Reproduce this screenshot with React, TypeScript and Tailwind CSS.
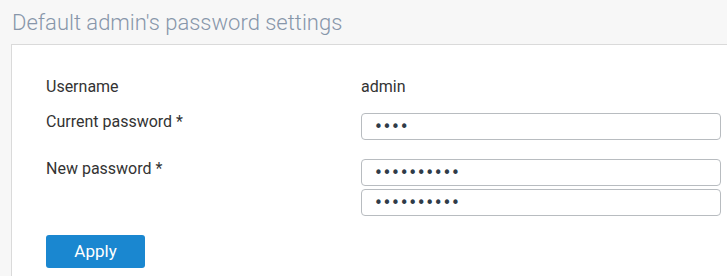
const fieldClass =
  "h-[27px] w-[360px] rounded-[4px] border border-[#b8bcc0] bg-white pl-[12px] font-['DejaVu_Sans',sans-serif] text-[15px] tracking-[-0.3px] text-[#2f3b48] outline-none";

export default function App() {
  return (
    <div className="h-[276px] w-[727px] overflow-hidden bg-[#f7f7f7] pl-[11px] font-['Roboto',sans-serif]">
      <h1 className="h-[44px] pl-px pt-[9px] text-[22px] font-light leading-[28px] text-[#8796aa]">
        Default admin's password settings
      </h1>
      <div className="h-[240px] border-l border-t border-[#dadada] bg-white pl-[34px] pt-[29px] text-[16px] text-[#333]">
        <div className="grid grid-cols-[315px_1fr] items-start">
          <div className="h-[26px] leading-[26px]">Username</div>
          <div className="h-[26px] leading-[26px]">admin</div>

          <div className="mt-[12px] leading-[20px]">Current password *</div>
          <div className="mt-[13px]">
            <input type="password" readOnly value="1234" className={fieldClass} />
          </div>

          <div className="mt-[19px] leading-[20px]">New password *</div>
          <div className="mt-[19px] flex flex-col gap-[3px]">
            <input type="password" readOnly value="1234567890" className={fieldClass} />
            <input type="password" readOnly value="1234567890" className={fieldClass} />
          </div>
        </div>
        <button className="mt-[19px] h-[33px] w-[99px] rounded-[3px] bg-[#1a87d0] text-[17px] text-white">
          Apply
        </button>
      </div>
    </div>
  );
}
